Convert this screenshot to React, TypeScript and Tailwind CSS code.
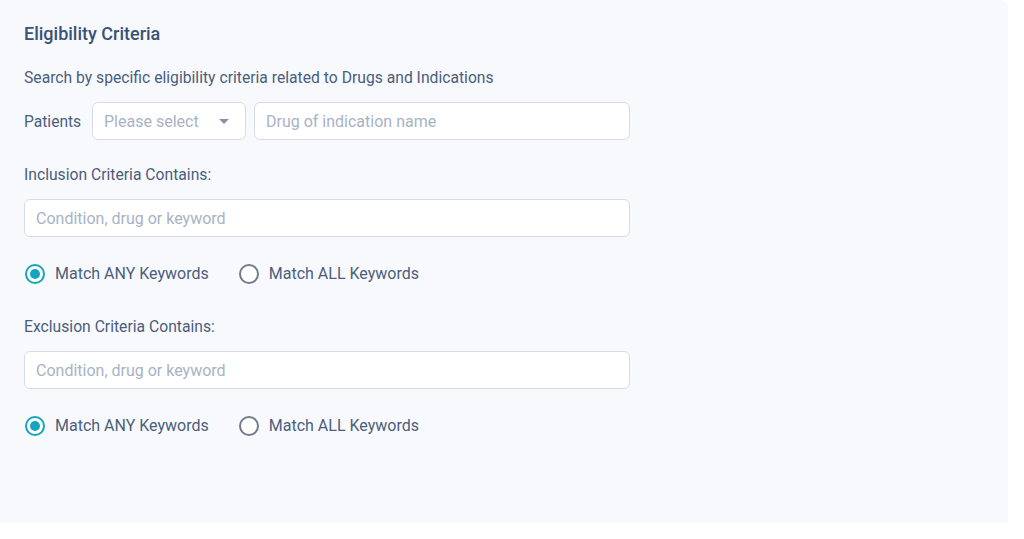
import type { ReactNode } from "react";

const font = { fontFamily: "Roboto, 'Noto Sans', Arial, sans-serif" };

function TextBox({ placeholder, className }: { placeholder: string; className?: string }) {
  return (
    <div
      className={`flex h-[38px] items-center rounded-md border border-[#d6dce5] bg-white px-[11px] pt-[1px] text-[16px] text-[#a8b3c3] ${className ?? ""}`}
    >
      {placeholder}
    </div>
  );
}

function Radio({ checked, children }: { checked?: boolean; children: ReactNode }) {
  return (
    <div className="flex items-center gap-[10px]">
      {checked ? (
        <span className="flex h-[20px] w-[20px] items-center justify-center rounded-full border-2 border-[#14a3c0] bg-white">
          <span className="h-[10px] w-[10px] rounded-full bg-[#14a3c0]" />
        </span>
      ) : (
        <span className="h-[20px] w-[20px] rounded-full border-2 border-[#717c8c] bg-white" />
      )}
      <span className="pt-[1px] text-[16px] leading-5 text-[#4b5e7c]">{children}</span>
    </div>
  );
}

function MatchOptions() {
  return (
    <div className="mt-[26px] flex items-center gap-[30px] pl-[1px]">
      <Radio checked>Match ANY Keywords</Radio>
      <Radio>Match ALL Keywords</Radio>
    </div>
  );
}

export default function App() {
  return (
    <div className="h-[539px] w-[1024px] bg-white" style={font}>
      <section className="h-[523px] w-[1008px] rounded-tr-lg bg-[#f7f9fd] px-6 pt-[22px]">
        <h2 className="text-[18px] font-medium leading-6 text-[#3a5276]">Eligibility Criteria</h2>
        <p className="mt-[22px] text-[15.7px] leading-5 text-[#4b5e7c]">
          Search by specific eligibility criteria related to Drugs and Indications
        </p>

        <div className="mt-[14px] flex items-center">
          <span className="w-[68px] pt-[3px] text-[15.6px] text-[#4b5e7c]">Patients</span>
          <div className="flex h-[38px] w-[154px] items-center justify-between rounded-md border border-[#d6dce5] bg-white pl-[11px] pr-[16px] pt-[1px] text-[16px] text-[#a8b3c3]">
            <span>Please select</span>
            <svg width="10" height="5" viewBox="0 0 10 5">
              <path d="M0 0 L10 0 L5 5 Z" fill="#8792a4" />
            </svg>
          </div>
          <TextBox placeholder="Drug of indication name" className="ml-2 w-[376px]" />
        </div>

        <p className="mt-[25px] text-[15.7px] leading-5 text-[#4b5e7c]">Inclusion Criteria Contains:</p>
        <TextBox placeholder="Condition, drug or keyword" className="mt-[14px] w-[606px]" />
        <MatchOptions />

        <p className="mt-[33px] text-[15.7px] leading-5 text-[#4b5e7c]">Exclusion Criteria Contains:</p>
        <TextBox placeholder="Condition, drug or keyword" className="mt-[14px] w-[606px]" />
        <MatchOptions />
      </section>
    </div>
  );
}
